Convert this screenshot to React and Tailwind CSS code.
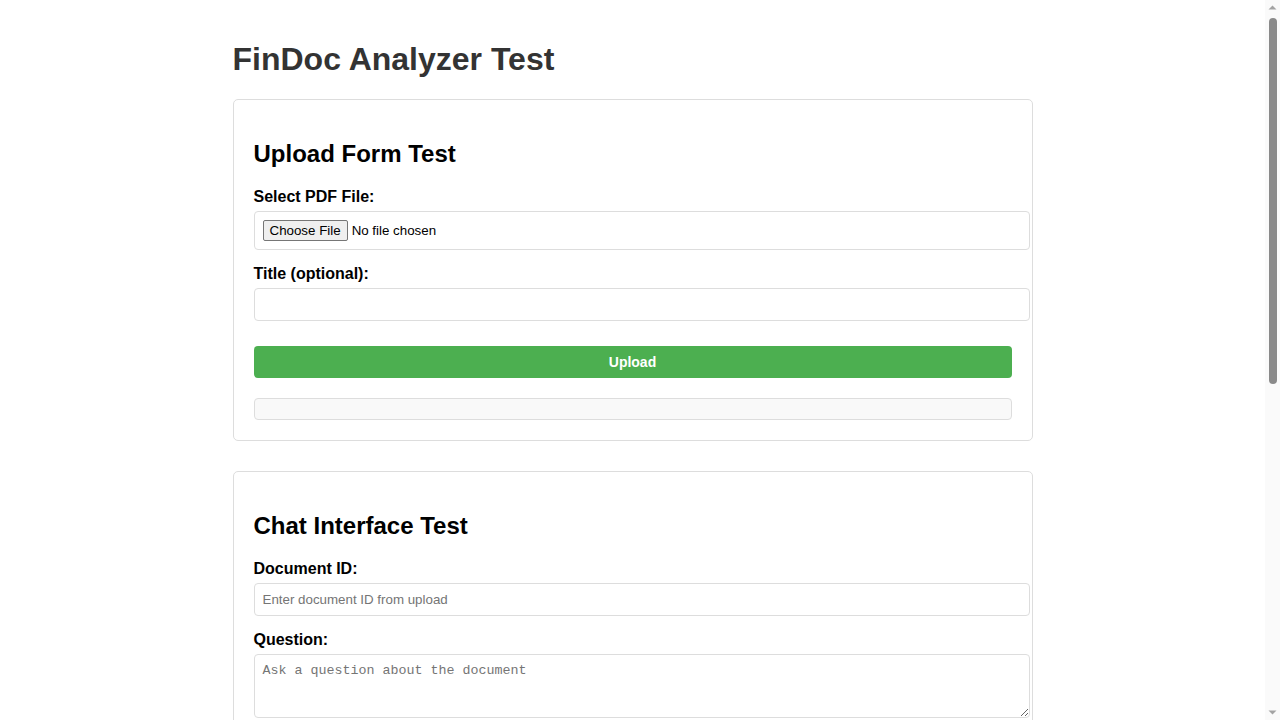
import { useState } from 'react'

const inputCls =
  'box-content block w-full p-[8px] border border-[#ddd] rounded-[4px] bg-white text-[13.33px] leading-[normal] text-black placeholder:text-[#757575] outline-none'

function Field({ label, children }) {
  return (
    <div className="mb-[15px]">
      <label className="block mb-[5px] text-[16px] font-bold leading-[normal]">{label}</label>
      {children}
    </div>
  )
}

function Section({ title, children }) {
  return (
    <section className="mb-[30px] rounded-[5px] border border-[#ddd] p-[20px]">
      <h2 className="my-[19.92px] text-[24px] font-bold leading-[normal]">{title}</h2>
      {children}
    </section>
  )
}

function SubmitButton({ children }) {
  return (
    <button
      type="button"
      className="mt-[25px] block w-full rounded-[4px] bg-[#4CAF50] py-[8px] px-[15px] text-[14px] font-bold leading-[16px] text-white"
    >
      {children}
    </button>
  )
}

function Result({ tall }) {
  return (
    <div
      className={
        'mt-[20px] rounded-[4px] border border-[#ddd] bg-[#f9f9f9] p-[10px] ' + (tall ? 'min-h-[60px]' : '')
      }
    />
  )
}

// page scrollbar strip, as the browser draws it
function ScrollStrip() {
  return (
    <div className="flex h-screen w-[15px] shrink-0 flex-col items-center bg-[#fafafa]">
      <svg width="15" height="15" viewBox="0 0 15 15" className="shrink-0">
        <path d="M3.5 9.5 L7.5 5.5 L11.5 9.5 Z" fill="#a3a3a3" />
      </svg>
      <div className="mt-[3px] h-[366px] w-[8px] rounded-full bg-[#8a8a8a]" />
      <div className="flex-1" />
      <svg width="15" height="15" viewBox="0 0 15 15" className="shrink-0">
        <path d="M3.5 5.5 L7.5 9.5 L11.5 5.5 Z" fill="#a3a3a3" />
      </svg>
    </div>
  )
}

export default function App() {
  const [title, setTitle] = useState('')
  const [docId, setDocId] = useState('')
  const [question, setQuestion] = useState('')

  return (
    <div className="flex h-screen bg-white font-['Liberation_Sans',Arial,sans-serif] text-black">
      <div className="h-screen flex-1 overflow-y-auto [scrollbar-width:none]">
        <div className="mx-auto max-w-[840px] px-[20px] pt-[20px] pb-[20px]">
          <h1 className="my-[21px] text-[32px] font-bold leading-[normal] text-[#333]">FinDoc Analyzer Test</h1>

          <Section title="Upload Form Test">
            <Field label="Select PDF File:">
              <input
                type="file"
                accept="application/pdf"
                className={
                  inputCls +
                  ' file:mr-[4px] file:h-[21px] file:rounded-[2px] file:border file:border-[#767676] file:bg-[#efefef] file:px-[6px] file:text-[13.33px] file:text-black'
                }
              />
            </Field>
            <Field label="Title (optional):">
              <input type="text" value={title} onChange={(e) => setTitle(e.target.value)} className={inputCls} />
            </Field>
            <SubmitButton>Upload</SubmitButton>
            <Result />
          </Section>

          <Section title="Chat Interface Test">
            <Field label="Document ID:">
              <input
                type="text"
                value={docId}
                onChange={(e) => setDocId(e.target.value)}
                placeholder="Enter document ID from upload"
                className={inputCls}
              />
            </Field>
            <Field label="Question:">
              <textarea
                value={question}
                onChange={(e) => setQuestion(e.target.value)}
                placeholder="Ask a question about the document"
                className={inputCls + " h-[46px] font-['Liberation_Mono',monospace]"}
              />
            </Field>
            <SubmitButton>Ask Question</SubmitButton>
            <Result tall />
          </Section>

          <Section title="Document List Test">
            <SubmitButton>Load Documents</SubmitButton>
            <Result tall />
          </Section>
        </div>
      </div>
      <ScrollStrip />
    </div>
  )
}
